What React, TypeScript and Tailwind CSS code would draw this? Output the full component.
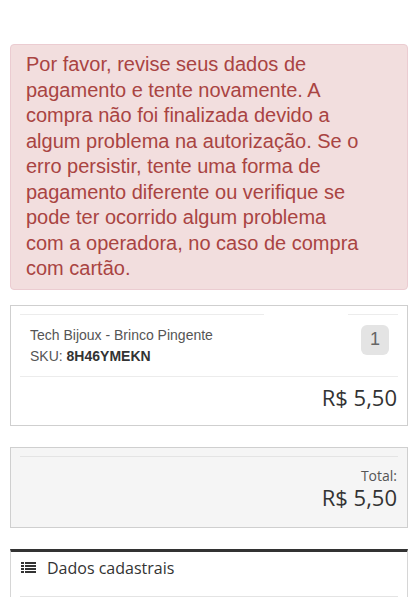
import React from 'react';

const arial = { fontFamily: '"Liberation Sans", Arial, sans-serif' };
const openSans = { fontFamily: '"Open Sans", sans-serif' };

export default function App() {
  return (
    <div className="min-h-[600px] bg-white pt-[44px] px-[10px]" style={arial}>
      {/* Alert (dismissible padding on the right) */}
      <div className="rounded-[4px] border border-[#ebccd1] bg-[#f2dede] pl-[15px] pr-[40px] pt-[7px] pb-[7px] text-[20px] leading-[25.5px] text-[#a94442]">
        Por favor, revise seus dados de pagamento e tente novamente. A compra não foi finalizada devido a algum problema na autorização. Se o erro persistir, tente uma forma de pagamento diferente ou verifique se pode ter ocorrido algum problema com a operadora, no caso de compra com cartão.
      </div>

      {/* Product card */}
      <div className="mt-[15px] border border-[#cfcfcf] bg-white px-[9px] pt-[8px] pb-[13px]">
        <div className="flex">
          <div className="h-px w-[244px] bg-[#ececec]" />
          <div className="flex-1" />
          <div className="h-px w-[50px] bg-[#ececec]" />
        </div>
        <div className="flex items-start justify-between pl-[10px] pr-[9px] pt-[10px] pb-[9px]">
          <div className="text-[14px] leading-[21px] text-[#555]">
            <div>Tech Bijoux - Brinco Pingente</div>
            <div>
              SKU: <span className="font-bold text-[#333]">8H46YMEKN</span>
            </div>
          </div>
          <div className="flex h-[30px] w-[28px] items-center justify-center rounded-[6px] bg-[#e4e4e4] text-[18px] text-[#666]">
            1
          </div>
        </div>
        <div className="h-px bg-[#ececec]" />
        <div className="pt-[5px] pr-[1px] text-right text-[22px] leading-[30px] text-[#333]" style={openSans}>
          R$ 5,50
        </div>
      </div>

      {/* Total */}
      <div
        className="mt-[21px] border border-[#cfcfcf] bg-[#f5f5f5] px-[9px] pt-[8px] pb-[18px] text-right"
        style={openSans}
      >
        <div className="h-px bg-[#e4e4e4]" />
        <div className="pt-[10px] pr-[1px] text-[14px] leading-[18px] text-[#555]">Total:</div>
        <div className="pr-[1px] text-[22px] leading-[24px] text-[#333]">R$ 5,50</div>
      </div>

      {/* Dados cadastrais */}
      <div
        className="mt-[21px] border-x border-t-[3px] border-x-[#d6d6d6] border-t-[#333] bg-white px-[9px]"
        style={openSans}
      >
        <div className="flex items-center gap-[11px] pl-[1px] pt-[5px] pb-[17px]">
          <svg width="15" height="11" viewBox="0 0 15 11" fill="#333">
            <rect x="0" y="0" width="3" height="2" />
            <rect x="4" y="0" width="11" height="2" />
            <rect x="0" y="3" width="3" height="2" />
            <rect x="4" y="3" width="11" height="2" />
            <rect x="0" y="6" width="3" height="2" />
            <rect x="4" y="6" width="11" height="2" />
            <rect x="0" y="9" width="3" height="2" />
            <rect x="4" y="9" width="11" height="2" />
          </svg>
          <span className="text-[16px] leading-[22px] text-[#333]">Dados cadastrais</span>
        </div>
        <div className="h-px bg-[#e4e4e4]" />
      </div>
    </div>
  );
}
